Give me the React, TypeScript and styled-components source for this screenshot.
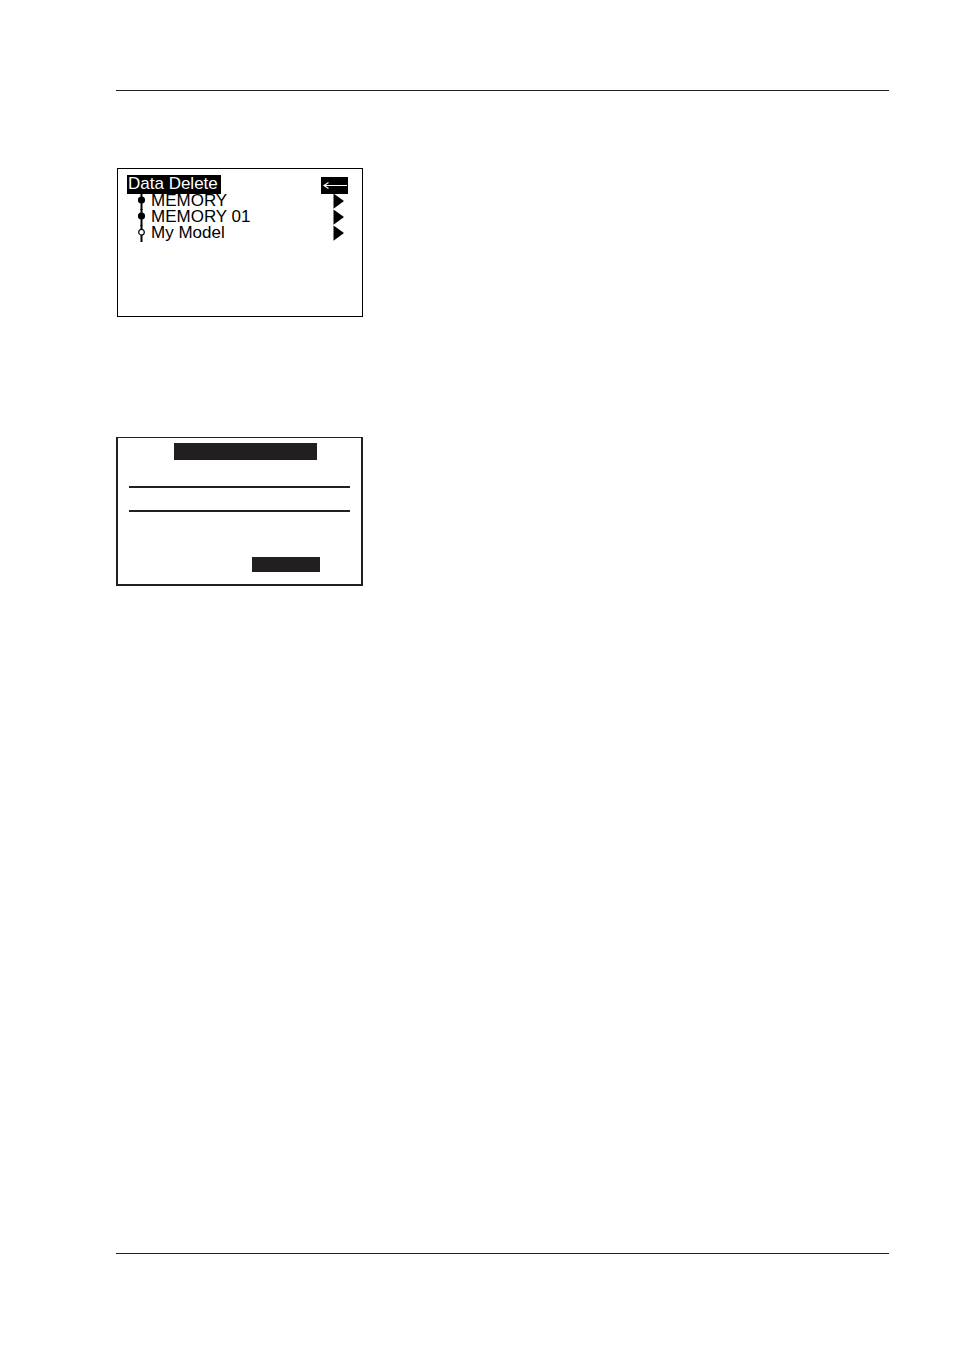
import React from "react";
import styled, { createGlobalStyle } from "styled-components";

const INK = "#231f20";

const GlobalStyle = createGlobalStyle`
  * { box-sizing: border-box; }
  body { margin: 0; background: #fff; }
`;

const Page = styled.div`
  display: flex;
  flex-direction: column;
  min-height: 100vh;
  padding: 90px 64px 98px 116px;
  color: #000;
  font-family: "Liberation Sans", Arial, sans-serif;
`;

const PageRule = styled.hr`
  width: 100%;
  height: 1px;
  margin: 0;
  border: 0;
  background: ${INK};
`;

const Content = styled.main`
  flex: 1;
  display: flex;
  flex-direction: column;
  align-items: flex-start;
  gap: 120px;
  padding-top: 77px;
`;

const MenuScreen = styled.section`
  width: 246px;
  min-height: 149px;
  margin-left: 1px;
  padding: 6px 14px 6px 9px;
  border: 1px solid #000;
`;

const MenuHeader = styled.header`
  position: relative;
  z-index: 1;
  display: flex;
  justify-content: space-between;
  align-items: flex-end;
  margin-bottom: -1px;
`;

const Title = styled.h1`
  margin: 0;
  padding: 0 3px 2px 1px;
  background: #000;
  color: #fff;
  font-size: 17px;
  font-weight: 400;
  line-height: 17px;
  white-space: nowrap;
`;

const BackButton = styled.button`
  display: flex;
  width: 27px;
  height: 17px;
  padding: 0;
  border: 0;
  background: #000;
`;

const MenuList = styled.ul`
  margin: 0;
  padding: 0 4px 0 10px;
  list-style: none;
`;

const MenuRow = styled.li`
  display: flex;
  align-items: center;
  height: 16px;
`;

const Label = styled.span`
  flex: 1;
  padding-left: 5px;
  font-size: 17px;
  line-height: 16px;
  white-space: nowrap;
`;

const OpenButton = styled.button`
  display: flex;
  width: 11px;
  height: 16px;
  padding: 0;
  border: 0;
  background: none;
`;

const Drawing = styled.svg`
  display: block;
  flex: none;
  overflow: visible;
`;

const DialogScreen = styled.section`
  display: flex;
  flex-direction: column;
  width: 247px;
  min-height: 149px;
  padding: 5px 11px 12px;
  border: 2px solid ${INK};
  border-top-width: 1px;
`;

const TitleBar = styled.div`
  width: 143px;
  height: 17px;
  margin: 0 0 26px 45px;
  background: ${INK};
`;

const Field = styled.div`
  height: 26px;
  border: solid ${INK};
  border-width: 2px 0;
`;

const ActionBar = styled.div`
  align-self: flex-end;
  width: 68px;
  height: 15px;
  margin: auto 30px 0 0;
  background: ${INK};
`;

const items = [
  { name: "MEMORY", filled: true },
  { name: "MEMORY 01", filled: true },
  { name: "My Model", filled: false },
];

function TreeNode({ filled }: { filled: boolean }) {
  return (
    <Drawing width="9" height="16" viewBox="0 0 9 16" aria-hidden="true">
      <path d="M4.5 0V17" stroke="#000" strokeWidth="2" />
      {filled ? (
        <circle cx="4.5" cy="7" r="3.6" fill="#000" />
      ) : (
        <circle cx="4.5" cy="7.2" r="2.8" fill="#fff" stroke="#000" strokeWidth="1.2" />
      )}
    </Drawing>
  );
}

export default function App() {
  return (
    <>
      <GlobalStyle />
      <Page>
        <PageRule />
        <Content>
          <MenuScreen>
            <MenuHeader>
              <Title>Data Delete</Title>
              <BackButton type="button" aria-label="Back">
                <Drawing width="27" height="17" viewBox="0 0 27 17" aria-hidden="true">
                  <path d="M3 8.5H26M7.5 5.5L3 8.5L7.5 11.5" fill="none" stroke="#fff" strokeWidth="1.2" />
                </Drawing>
              </BackButton>
            </MenuHeader>
            <MenuList>
              {items.map((item) => (
                <MenuRow key={item.name}>
                  <TreeNode filled={item.filled} />
                  <Label>{item.name}</Label>
                  <OpenButton type="button" aria-label={`Open ${item.name}`}>
                    <Drawing width="11" height="16" viewBox="0 0 11 16" aria-hidden="true">
                      <path d="M0.5 0.5L11 8L0.5 15.8Z" fill="#000" />
                    </Drawing>
                  </OpenButton>
                </MenuRow>
              ))}
            </MenuList>
          </MenuScreen>
          <DialogScreen>
            <TitleBar />
            <Field />
            <ActionBar />
          </DialogScreen>
        </Content>
        <PageRule />
      </Page>
    </>
  );
}
